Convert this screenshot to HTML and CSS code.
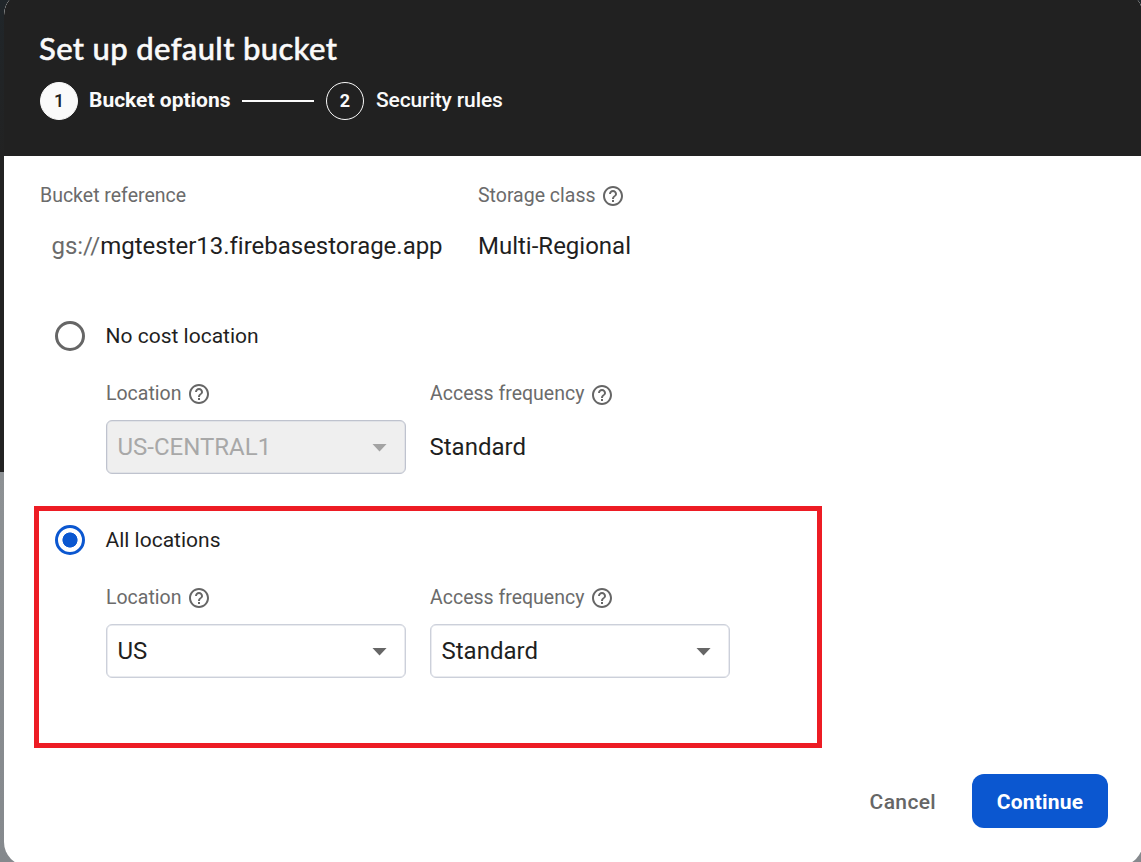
FILE: index.html
```
<!DOCTYPE html>
<html lang="en">
<head>
<meta charset="utf-8">
<title>Set up default bucket</title>
<link rel="stylesheet" href="styles.css">
</head>
<body>
<svg class="defs" width="0" height="0">
  <symbol id="help" viewBox="0 0 24 24"><path fill="currentColor" d="M11 18h2v-2h-2v2zm1-16C6.48 2 2 6.48 2 12s4.480 10 10 10 10-4.480 10-10S17.520 2 12 2zm0 18c-4.410 0-8-3.590-8-8s3.590-8 8-8 8 3.590 8 8-3.590 8-8 8zm0-14c-2.210 0-4 1.790-4 4h2c0-1.100.9-2 2-2s2 .9 2 2c0 2-3 1.750-3 5h2c0-2.250 3-2.500 3-5 0-2.210-1.790-4-4-4z"/></symbol>
</svg>
<main class="dialog">
  <header class="header">
    <h1 class="title">Set up default bucket</h1>
    <div class="stepper">
      <span class="step-num active">1</span>
      <span class="step-label current">Bucket options</span>
      <span class="step-line"></span>
      <span class="step-num">2</span>
      <span class="step-label next">Security rules</span>
    </div>
  </header>
  <section class="summary">
    <div class="reference">
      <div class="label">Bucket reference</div>
      <div class="value bucket"><span class="scheme">gs://</span><span class="bucket-name">mgtester13.firebasestorage.app</span></div>
    </div>
    <div class="storage">
      <div class="label"><span>Storage class</span><svg class="help"><use href="#help"/></svg></div>
      <div class="value">Multi-Regional</div>
    </div>
  </section>
  <section class="option">
    <div class="choice"><span class="radio"></span><span class="choice-label">No cost location</span></div>
    <div class="fields">
      <div class="field">
        <div class="label"><span>Location</span><svg class="help"><use href="#help"/></svg></div>
        <div class="select disabled"><span>US-CENTRAL1</span><span class="arrow"></span></div>
      </div>
      <div class="field">
        <div class="label"><span>Access frequency</span><svg class="help low"><use href="#help"/></svg></div>
        <div class="static">Standard</div>
      </div>
    </div>
  </section>
  <section class="option">
    <div class="choice"><span class="radio checked"></span><span class="choice-label">All locations</span></div>
    <div class="fields">
      <div class="field">
        <div class="label"><span>Location</span><svg class="help"><use href="#help"/></svg></div>
        <div class="select"><span>US</span><span class="arrow"></span></div>
      </div>
      <div class="field">
        <div class="label"><span>Access frequency</span><svg class="help"><use href="#help"/></svg></div>
        <div class="select"><span>Standard</span><span class="arrow"></span></div>
      </div>
    </div>
    <div class="highlight"></div>
  </section>
  <footer class="actions">
    <button class="btn">Cancel</button>
    <button class="btn primary">Continue</button>
  </footer>
</main>
</body>
</html>
```
FILE: styles.css
```
* { box-sizing: border-box; }
html { height: 100%; overflow: hidden; }
body {
  margin: 0;
  height: 862px;
  overflow: hidden;
  font-family: Roboto, "Liberation Sans", sans-serif;
  color: #1f1f1f;
  background: linear-gradient(#20262a 0, #222 160px, #222 472px, #8d9194 472px, #85898d 862px);
}
.defs { position: absolute; }
.dialog {
  width: 1139px;
  height: 875px;
  margin: -9px 0 0 4px;
  border-radius: 24px;
  overflow: hidden;
  background: #fff;
}
.header {
  height: 165px;
  padding: 39px 0 0 36px;
  border-radius: 24px 24px 0 0;
  background: #212121;
  color: #fafafa;
}
.title {
  margin: 0 0 0 -1px;
  height: 36px;
  font: 500 31px/36px Lato, sans-serif;
  letter-spacing: 0.36px;
  -webkit-text-stroke: 0.5px #fafafa;
  white-space: nowrap;
}
.stepper { display: flex; align-items: center; height: 38px; margin-top: 16px; }
.step-num {
  display: flex;
  align-items: center;
  justify-content: center;
  width: 38px;
  height: 38px;
  padding-bottom: 1px;
  border: 1px solid #fafafa;
  border-radius: 50%;
  font-size: 18px;
  font-weight: 700;
}
.step-num.active { background: #fafafa; color: #212121; font-weight: 500; }
.step-label { margin: 0 0 2px 12px; font-size: 21px; line-height: 28px; font-weight: 500; white-space: nowrap; }
.step-label.current { width: 141px; margin-left: 11px; margin-right: 0; font-weight: 700; }
.step-label.next { letter-spacing: -0.12px; }
.step-line { width: 72px; height: 2px; margin: 0 12px; background: #fafafa; }
.summary { display: flex; height: 154px; padding: 25px 0 0 36px; }
.reference { width: 438px; }
.label { display: flex; align-items: center; height: 28px; padding-top: 2px; font-size: 19.5px; line-height: 26px; color: #6b6b6b; white-space: nowrap; }
.help { width: 24px; height: 24px; margin: 0 0 0 5.6px; color: #666; }
.help.low { margin-top: 2px; }
.value { height: 36px; margin-top: 19px; font-size: 24px; line-height: 36px; white-space: nowrap; }
.bucket { padding-left: 11.5px; letter-spacing: -0.02px; }
.scheme { color: #6b6b6b; }
.option { position: relative; height: 204px; padding: 10px 0 0 51px; }
.choice { display: flex; align-items: center; height: 32px; }
.radio { width: 30px; height: 30px; border: 3px solid #666; border-radius: 50%; }
.radio.checked { border-color: #0b57d0; background: radial-gradient(circle, #0b57d0 7.2px, transparent 7.9px); }
.choice-label { margin-left: 20.5px; font-size: 21px; line-height: 30px; white-space: nowrap; }
.fields { display: flex; gap: 24px; padding: 27px 0 0 51px; }
.field { width: 300px; }
.select {
  display: flex;
  align-items: center;
  justify-content: space-between;
  height: 54px;
  margin-top: 13px;
  padding: 0 18px 0 10.5px;
  border: 1px solid #ccd0da;
  box-shadow: inset 0 0 0 0.5px #d4d7e0;
  border-radius: 6px;
  font-size: 24px;
}
.select.disabled { background: #efefef; border-color: #bfc3ce; color: #a8a8a8; }
.arrow { width: 15px; height: 8px; margin-top: 1px; background: #666; clip-path: polygon(0 0, 100% 0, 50% 100%); }
.disabled .arrow { background: #a3a3a3; }
.static { margin: 13px 0 0 -0.5px; font-size: 24px; line-height: 54px; }
.highlight { position: absolute; left: 30px; top: -8px; width: 788px; height: 242px; border: 5px solid #ed1c24; }
.actions { display: flex; justify-content: flex-end; gap: 12px; padding: 56px 35px 0 0; }
.btn { height: 54px; padding: 2px 24px 0; border: 0; border-radius: 12px; background: none; font: 500 21px Roboto, sans-serif; letter-spacing: 0.35px; color: #666; white-space: nowrap; }
.btn.primary { width: 136px; background: #0b57d0; color: #fff; font-weight: 700; letter-spacing: 0.2px; }
```
